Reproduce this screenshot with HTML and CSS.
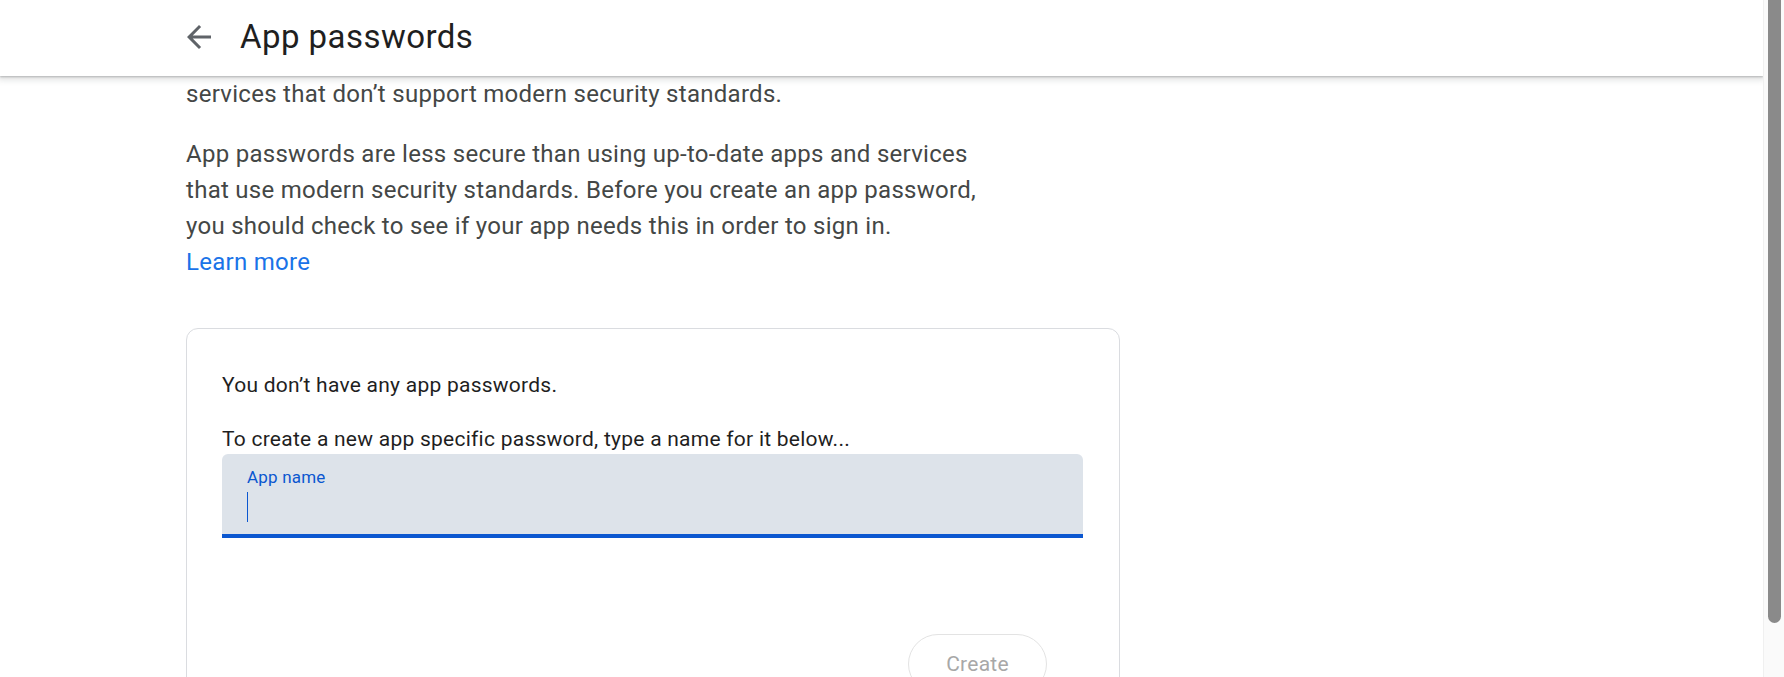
FILE: index.html
```html
<!DOCTYPE html>
<html lang="en">
<head>
<meta charset="utf-8">
<title>App passwords</title>
<link rel="stylesheet" href="styles.css">
</head>
<body>
<div class="window">
  <div class="page">
    <header class="topbar">
      <span class="back" aria-label="Back">
        <svg viewBox="0 0 24 24" width="36" height="36"><path d="M20 11H7.83l5.59-5.59L12 4l-8 8 8 8 1.41-1.41L7.83 13H20v-2z" fill="#5f6368"/></svg>
      </span>
      <h1 class="title">App passwords</h1>
    </header>
    <main class="content">
      <p class="para">services that don’t support modern security standards.</p>
      <p class="para">App passwords are less secure than using up-to-date apps and services that use modern security standards. Before you create an app password, you should check to see if your app needs this in order to sign in.<br><a class="link" href="#">Learn more</a></p>
      <section class="card">
        <p class="card-text">You don’t have any app passwords.</p>
        <p class="card-text second">To create a new app specific password, type a name for it below...</p>
        <div class="field">
          <span class="field-label">App name</span>
          <span class="caret"></span>
        </div>
        <div class="actions">
          <button class="btn" disabled>Create</button>
        </div>
      </section>
    </main>
  </div>
  <div class="scrollbar"><div class="thumb"></div></div>
</div>
</body>
</html>
```
FILE: styles.css
```css
html, body {
  margin: 0;
  padding: 0;
  height: 677px;
  overflow: hidden;
  background: #fff;
  font-family: Roboto, "Liberation Sans", Arial, sans-serif;
}
.window {
  display: flex;
  height: 677px;
  overflow: hidden;
}
.page {
  flex: 1;
  min-width: 0;
  display: flex;
  flex-direction: column;
  overflow: hidden;
}
.topbar {
  height: 76px;
  box-sizing: border-box;
  padding: 0 0 3px 181px;
  display: flex;
  align-items: center;
  background: #fff;
  box-shadow: 0 1px 2px rgba(60,64,67,.3), 0 2px 6px 2px rgba(60,64,67,.15);
  position: relative;
  z-index: 2;
  flex-shrink: 0;
}
.back {
  width: 36px;
  height: 36px;
  display: flex;
}
.title {
  margin: 0 0 0 23px;
  font-size: 33px;
  font-weight: 400;
  letter-spacing: 0.45px;
  color: #1f1f1f;
  line-height: 40px;
}
.content {
  padding-left: 186px;
}
.para {
  margin: 0 0 24px;
  width: 800px;
  font-size: 24px;
  line-height: 36px;
  letter-spacing: 0.28px;
  color: #444746;
}
.link {
  color: #1a73e8;
  text-decoration: none;
}
.card {
  margin-top: 48px;
  width: 934px;
  box-sizing: border-box;
  border: 1px solid #dadce0;
  border-radius: 12px;
  padding: 41px 0 0 35px;
  height: 380px;
}
.card-text {
  margin: 0;
  font-size: 21px;
  line-height: 30px;
  letter-spacing: 0.25px;
  color: #1f1f1f;
}
.second {
  margin-top: 24px;
}
.field {
  width: 861px;
  height: 84px;
  box-sizing: border-box;
  background: #dde3ea;
  border-radius: 6px 6px 0 0;
  border-bottom: 4px solid #0b57d0;
  padding: 13px 0 0 25px;
  display: flex;
  flex-direction: column;
  align-items: flex-start;
}
.field-label {
  font-size: 17px;
  line-height: 20px;
  letter-spacing: 0.2px;
  color: #0b57d0;
}
.caret {
  margin-top: 5px;
  width: 1px;
  height: 30px;
  background: #0b57d0;
}
.actions {
  display: flex;
  justify-content: flex-end;
  padding: 96px 72px 0 0;
}
.btn {
  width: 139px;
  height: 60px;
  border: 1px solid #e3e3e3;
  border-radius: 30px;
  background: #fff;
  font-family: Roboto, "Liberation Sans", Arial, sans-serif;
  font-size: 21px;
  letter-spacing: 0.25px;
  color: #a8a8a8;
  padding: 0;
}
.scrollbar {
  width: 21px;
  flex-shrink: 0;
  background: #fafafa;
  border-left: 1px solid #f0f0f0;
  box-sizing: border-box;
  padding: 0 3px 0 4px;
}
.thumb {
  height: 623px;
  background: #8a8a8a;
  border-radius: 0 0 7px 7px;
}
```
